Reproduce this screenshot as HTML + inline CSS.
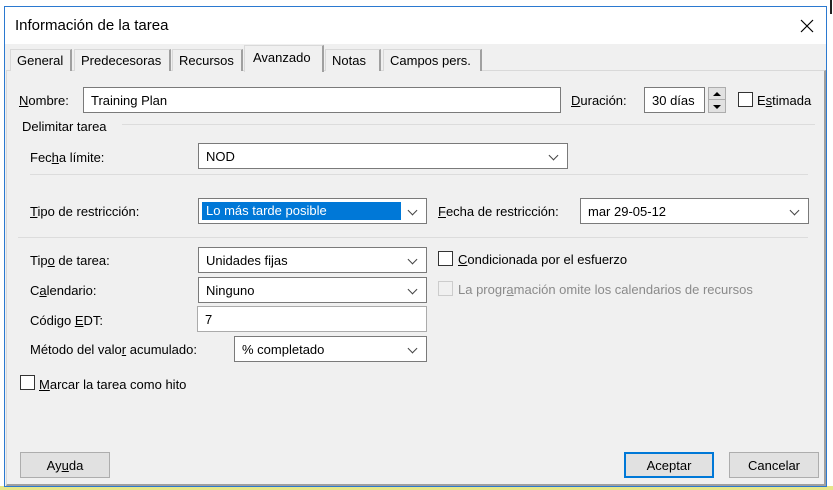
<!DOCTYPE html>
<html><head><meta charset="utf-8"><style>
*{box-sizing:border-box;margin:0;padding:0}
body{width:833px;height:490px;position:relative;overflow:hidden;background:#fff;font-family:"Liberation Sans",sans-serif;font-size:13px;color:#000}
.a{position:absolute;white-space:nowrap}
.inp{position:absolute;background:#fff;border:1px solid #7a7a7a;height:26px;padding:5px 0 0 7px}
.inp.sel::after{content:"";position:absolute;right:10px;top:8px;width:6px;height:6px;border-right:1px solid #444;border-bottom:1px solid #444;transform:rotate(45deg)}
.cb{position:absolute;width:15px;height:15px;border:1px solid #333;background:#fff}
.sep{position:absolute;height:1px;background:#dcdcdc}
.tab{position:absolute;top:49px;height:22px;border:1px solid #d9d9d9;border-bottom:none;border-right:2px solid #a0a0a0;background:#f0f0f0;padding:3px 0 0 6px}
.btn{position:absolute;height:26px;width:90px;border:1px solid #adadad;background:#e1e1e1;text-align:center;padding-top:5px}
u{text-decoration:underline}
</style></head><body>
<div class="a" style="left:0;top:486px;width:833px;height:4px;background:#e6e68a"></div>
<div class="a" style="left:830px;top:0;width:2px;height:14px;background:#222"></div>
<div class="a" style="left:4px;top:6px;width:823px;height:481px;background:#fff;border:1px solid #2b79d0"></div>
<div class="a" style="left:15px;top:17px;font-size:15px">Información de la tarea</div>
<svg class="a" style="left:800px;top:19px" width="14" height="14"><path d="M1 1L13 13M13 1L1 13" stroke="#000" stroke-width="1.2"/></svg>
<div class="a" style="left:5px;top:44px;width:821px;height:442px;background:#f0f0f0"></div>
<div class="a" style="left:6px;top:70px;width:820px;height:416px;border:1px solid #d9d9d9;border-right:2px solid #a0a0a0;border-bottom:2px solid #a0a0a0"></div>
<div class="tab" style="left:10px;width:62px">General</div>
<div class="tab" style="left:74px;width:97px">Predecesoras</div>
<div class="tab" style="left:172px;width:71px">Recursos</div>
<div class="a" style="left:244px;top:45px;width:80px;height:27px;background:#f0f0f0;border:1px solid #d9d9d9;border-bottom:none;border-right:2px solid #a0a0a0;padding:4px 0 0 8px">Avanzado</div>
<div class="tab" style="left:325px;width:56px">Notas</div>
<div class="tab" style="left:383px;width:99px">Campos pers.</div>
<div class="a" style="left:19px;top:93px"><u>N</u>ombre:</div>
<div class="inp" style="left:83px;top:87px;width:478px">Training Plan</div>
<div class="a" style="left:571px;top:93px"><u>D</u>uración:</div>
<div class="inp" style="left:644px;top:87px;width:61px">30 días</div>
<div class="a" style="left:708px;top:87px;width:18px;height:26px;background:#e1e1e1;border:1px solid #adadad"></div>
<div class="a" style="left:709px;top:99px;width:16px;height:1px;background:#adadad"></div>
<svg class="a" style="left:712px;top:91px" width="10" height="20"><path d="M1 5L5 1L9 5Z M1 14L9 14L5 18Z" fill="#000"/></svg>
<div class="cb" style="left:738px;top:92px"></div>
<div class="a" style="left:757px;top:93px">E<u>s</u>timada</div>
<div class="a" style="left:22px;top:119px">Delimitar tarea</div>
<div class="sep" style="left:122px;top:124px;width:693px"></div>
<div class="a" style="left:30px;top:150px">Fec<u>h</u>a límite:</div>
<div class="inp sel" style="left:198px;top:143px;width:370px">NOD</div>
<div class="sep" style="left:30px;top:174px;width:778px"></div>
<div class="a" style="left:30px;top:204px"><u>T</u>ipo de restricción:</div>
<div class="inp sel" style="left:198px;top:198px;width:229px;padding:3px"><div style="background:#0078d7;color:#fff;width:199px;height:18px;padding:1px 0 0 4px">Lo más tarde posible</div></div>
<div class="a" style="left:438px;top:204px"><u>F</u>echa de restricción:</div>
<div class="inp sel" style="left:580px;top:198px;width:229px">mar 29-05-12</div>
<div class="sep" style="left:18px;top:237px;width:790px"></div>
<div class="a" style="left:30px;top:253px">Tip<u>o</u> de tarea:</div>
<div class="inp sel" style="left:198px;top:247px;width:229px">Unidades fijas</div>
<div class="cb" style="left:438px;top:251px"></div>
<div class="a" style="left:458px;top:252px"><u>C</u>ondicionada por el esfuerzo</div>
<div class="a" style="left:30px;top:283px">C<u>a</u>lendario:</div>
<div class="inp sel" style="left:198px;top:277px;width:229px">Ninguno</div>
<div class="cb" style="left:438px;top:281px;border-color:#ccc;background:#f0f0f0"></div>
<div class="a" style="left:458px;top:282px;color:#8a8a8a">La progr<u>a</u>mación omite los calendarios de recursos</div>
<div class="a" style="left:30px;top:313px">Código <u>E</u>DT:</div>
<div class="inp" style="left:197px;top:306px;width:230px;border-color:#ababab">7</div>
<div class="a" style="left:30px;top:342px">Método del valo<u>r</u> acumulado:</div>
<div class="inp sel" style="left:234px;top:336px;width:193px">% completado</div>
<div class="cb" style="left:20px;top:375px"></div>
<div class="a" style="left:39px;top:377px"><u>M</u>arcar la tarea como hito</div>
<div class="btn" style="left:20px;top:452px">Ay<u>u</u>da</div>
<div class="btn" style="left:624px;top:452px;border:2px solid #0078d7;padding-top:4px">Aceptar</div>
<div class="btn" style="left:729px;top:452px">Cancelar</div>
</body></html>
